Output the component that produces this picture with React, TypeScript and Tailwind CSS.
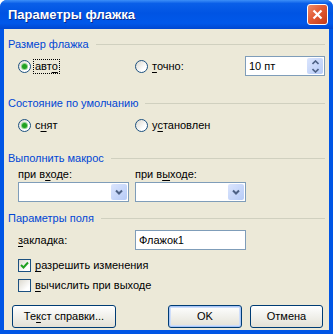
import type { ReactNode } from 'react';

const font = "font-['Liberation_Sans',Arial,sans-serif]";

function U({ children }: { children: ReactNode }) {
	return <span className="underline underline-offset-[2px]">{children}</span>;
}

function GroupHeader({ title, className = '' }: { title: string; className?: string }) {
	return (
		<div className={`flex h-[13px] items-center ${className}`}>
			<span className="text-[11px] leading-[13px] text-[#0046d5]">{title}</span>
			<div className="ml-[7px] h-px flex-1 bg-[#d0d0bf]" />
		</div>
	);
}

function Radio({ checked }: { checked?: boolean }) {
	return (
		<span className="relative flex h-[13px] w-[13px] shrink-0 items-center justify-center rounded-full border border-[#1c5180] bg-[linear-gradient(135deg,#dcd9cf_0%,#ffffff_70%)]">
			{checked && (
				<span className="h-[5px] w-[5px] rounded-full bg-[#21a121] shadow-[0_0_0_1px_#8fd18f]" />
			)}
		</span>
	);
}

function Check({ checked }: { checked?: boolean }) {
	return (
		<span className="flex h-[13px] w-[13px] shrink-0 items-center justify-center border border-[#1c5180] bg-[linear-gradient(135deg,#dcd9cf_0%,#ffffff_75%)]">
			{checked && (
				<svg width="9" height="9" viewBox="0 0 9 9">
					<path d="M1 4 L3.5 6.5 L8 1.5" stroke="#21a121" strokeWidth="2" fill="none" />
				</svg>
			)}
		</span>
	);
}

function Combo() {
	return (
		<div className="flex h-[20px] w-[111px] items-stretch border border-[#7f9db9] bg-white p-px">
			<div className="flex-1" />
			<div className="flex w-[16px] items-center justify-center rounded-[2px] bg-[linear-gradient(135deg,#dbe5fd_0%,#b6cbf7_100%)]">
				<svg width="8" height="6" viewBox="0 0 8 6">
					<path d="M1 1.5 L4 4.5 L7 1.5" stroke="#4d6185" strokeWidth="2" fill="none" />
				</svg>
			</div>
		</div>
	);
}

function XpButton({ children, width, isDefault }: { children: ReactNode; width: string; isDefault?: boolean }) {
	return (
		<button
			className={`${width} flex h-[23px] items-center justify-center rounded-[3px] border border-[#003c74] bg-[linear-gradient(to_bottom,#ffffff_0%,#f3f3ef_40%,#e4e1d6_100%)] text-[11px] text-black ${
				isDefault ? 'shadow-[inset_0_0_0_1px_#a8c6f7,inset_0_0_0_2px_#cfdefa]' : ''
			}`}
		>
			{children}
		</button>
	);
}

export default function App() {
	return (
		<div className={`flex h-[334px] w-[333px] flex-col overflow-hidden rounded-t-[7px] bg-[#0055e5] ${font}`}>
			{/* Title bar */}
			<div className="flex h-[29px] shrink-0 items-center justify-between bg-[linear-gradient(to_bottom,#3d8ff8_0%,#0a5fe8_12%,#0054e3_45%,#0058ea_80%,#0047d0_100%)] pl-[8px] pr-[5px]">
				<span className="text-[13px] font-bold text-white [text-shadow:1px_1px_0_#0b2a8a]">
					Параметры флажка
				</span>
				<div className="flex h-[21px] w-[21px] items-center justify-center rounded-[3px] border border-white bg-[linear-gradient(135deg,#ef8c6a_0%,#e25b35_45%,#c53a17_100%)]">
					<svg width="11" height="11" viewBox="0 0 11 11">
						<path d="M1.5 1.5 L9.5 9.5 M9.5 1.5 L1.5 9.5" stroke="white" strokeWidth="2.2" />
					</svg>
				</div>
			</div>

			{/* Body */}
			<div className="mx-[4px] mb-[4px] flex flex-1 flex-col bg-[#ece9d8] px-[4px] text-[11px] leading-[13px] text-black">
				<GroupHeader title="Размер флажка" className="mt-[9px]" />
				<div className="mt-[5px] ml-[10px] flex h-[20px] items-center">
					<div className="flex w-[117px] items-center gap-[3px]">
						<Radio checked />
						<span className="px-px outline-1 outline-dotted outline-black">
							авт<U>о</U>
						</span>
					</div>
					<div className="flex w-[110px] items-center gap-[4px]">
						<Radio />
						<span>
							<U>т</U>очно:
						</span>
					</div>
					<div className="flex h-[20px] w-[80px] items-stretch border border-[#7f9db9] bg-white p-px">
						<span className="flex flex-1 items-center pl-[2px]">10 пт</span>
						<div className="flex w-[16px] flex-col rounded-[2px] bg-[linear-gradient(135deg,#dbe5fd_0%,#b6cbf7_100%)]">
							<div className="flex flex-1 items-center justify-center">
								<svg width="7" height="5" viewBox="0 0 7 5">
									<path d="M0.5 4 L3.5 1 L6.5 4" stroke="#4d6185" strokeWidth="1.6" fill="none" />
								</svg>
							</div>
							<div className="flex flex-1 items-center justify-center">
								<svg width="7" height="5" viewBox="0 0 7 5">
									<path d="M0.5 1 L3.5 4 L6.5 1" stroke="#4d6185" strokeWidth="1.6" fill="none" />
								</svg>
							</div>
						</div>
					</div>
				</div>

				<GroupHeader title="Состояние по умолчанию" className="mt-[21px]" />
				<div className="mt-[9px] ml-[10px] flex h-[13px] items-center">
					<div className="flex w-[117px] items-center gap-[4px]">
						<Radio checked />
						<span>
							с<U>н</U>ят
						</span>
					</div>
					<div className="flex items-center gap-[4px]">
						<Radio />
						<span>
							у<U>с</U>тановлен
						</span>
					</div>
				</div>

				<GroupHeader title="Выполнить макрос" className="mt-[20px]" />
				<div className="mt-[3px] ml-[10px] flex h-[13px]">
					<span className="w-[117px]">
						при в<U>х</U>оде:
					</span>
					<span>
						при в<U>ы</U>ходе:
					</span>
				</div>
				<div className="mt-[1px] ml-[10px] flex gap-[6px]">
					<Combo />
					<Combo />
				</div>

				<GroupHeader title="Параметры поля" className="mt-[10px]" />
				<div className="mt-[5px] ml-[10px] flex h-[20px] items-center">
					<span className="w-[117px]">
						<U>з</U>акладка:
					</span>
					<div className="flex h-[20px] w-[111px] items-center border border-[#7f9db9] bg-white pl-[3px]">
						Флажок1
					</div>
				</div>
				<div className="mt-[9px] ml-[10px] flex h-[13px] items-center gap-[4px]">
					<Check checked />
					<span>
						<U>р</U>азрешить изменения
					</span>
				</div>
				<div className="mt-[7px] ml-[10px] flex h-[13px] items-center gap-[4px]">
					<Check />
					<span>
						<U>в</U>ычислить при выходе
					</span>
				</div>

				<div className="mt-[13px] ml-[4px] mr-[2px] flex items-center">
					<XpButton width="w-[104px]">
						Те<U>к</U>ст справки...
					</XpButton>
					<div className="flex-1" />
					<XpButton width="w-[74px]" isDefault>
						OK
					</XpButton>
					<div className="w-[8px]" />
					<XpButton width="w-[73px]">Отмена</XpButton>
				</div>
			</div>
		</div>
	);
}
